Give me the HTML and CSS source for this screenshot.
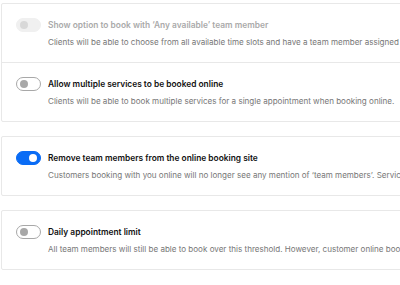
FILE: index.html
```html
<!DOCTYPE html>
<html lang="en">
<head>
    <meta charset="UTF-8">
    <meta name="viewport" content="width=device-width, initial-scale=1.0">
    <title>Online booking settings</title>
    <link rel="stylesheet" href="styles.css">
</head>
<body>
    <div class="settings">
        <div class="card">
            <div class="row">
                <span class="toggle disabled"></span>
                <div class="text">
                    <div class="title muted">Show option to book with ‘Any available’ team member</div>
                    <div class="desc">Clients will be able to choose from all available time slots and have a team member assigned</div>
                </div>
            </div>
            <div class="row">
                <span class="toggle"></span>
                <div class="text">
                    <div class="title">Allow multiple services to be booked online</div>
                    <div class="desc">Clients will be able to book multiple services for a single appointment when booking online.</div>
                </div>
            </div>
        </div>
        <div class="card">
            <div class="row">
                <span class="toggle on"></span>
                <div class="text">
                    <div class="title">Remove team members from the online booking site</div>
                    <div class="desc">Customers booking with you online will no longer see any mention of ‘team members’. Services will be booked</div>
                </div>
            </div>
        </div>
        <div class="card">
            <div class="row">
                <span class="toggle"></span>
                <div class="text">
                    <div class="title">Daily appointment limit</div>
                    <div class="desc">All team members will still be able to book over this threshold. However, customer online bookings will be limited</div>
                </div>
            </div>
        </div>
    </div>
</body>
</html>
```

FILE: styles.css
```css
body {
    margin: 0;
    font-family: Inter, "Noto Sans", sans-serif;
    background-color: #fff;
    overflow: hidden;
}
.settings {
    display: flex;
    flex-direction: column;
    gap: 14px;
    padding: 3px 0 0 1px;
    width: 700px;
}
.card {
    border: 1px solid #e8e8e8;
    border-radius: 2px;
}
.row {
    display: flex;
    align-items: flex-start;
    gap: 7px;
    padding: 14px 14px 13px 14px;
}
.row + .row {
    border-top: 1px solid #e8e8e8;
}
.text {
    white-space: nowrap;
}
.title {
    font-size: 8.4px;
    font-weight: 600;
    line-height: 14px;
    color: #111;
}
.title.muted {
    color: #aaa;
}
.desc {
    margin-top: 3px;
    font-size: 8.05px;
    line-height: 14px;
    color: #777;
}
.toggle {
    position: relative;
    flex: none;
    box-sizing: border-box;
    width: 25px;
    height: 14px;
    border: 1px solid #a8a8a8;
    border-radius: 7px;
    background-color: #fff;
}
.toggle::after {
    content: "";
    position: absolute;
    top: 2px;
    left: 3px;
    width: 8px;
    height: 8px;
    border-radius: 50%;
    background-color: #a8a8a8;
}
.toggle.disabled {
    border-color: #f0f0f0;
    background-color: #f0f0f0;
}
.toggle.disabled::after {
    background-color: #d8d8d8;
}
.toggle.on {
    border-color: #0a6cf5;
    background-color: #0a6cf5;
}
.toggle.on::after {
    left: auto;
    right: 3px;
    background-color: #fff;
}
```
